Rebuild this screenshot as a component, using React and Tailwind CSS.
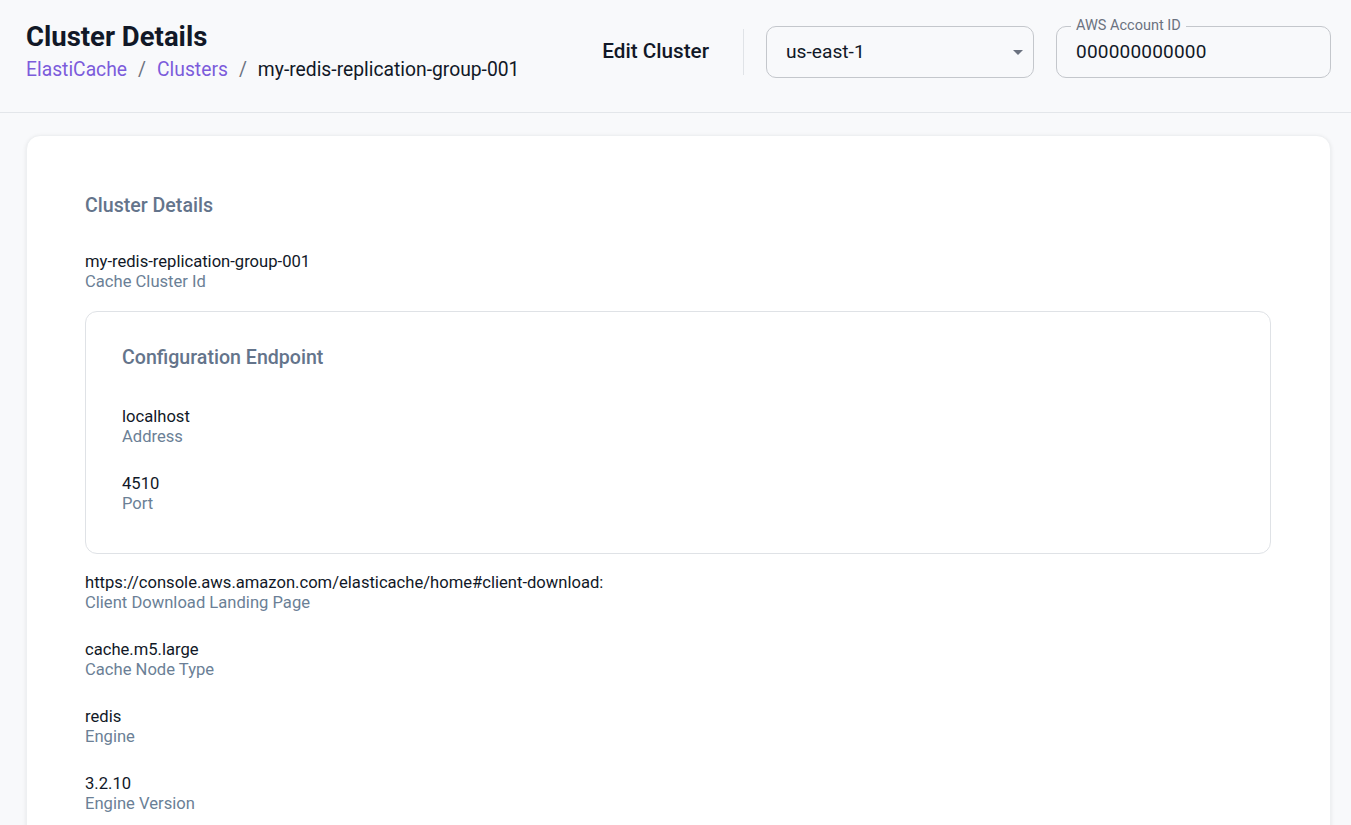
const font = { fontFamily: 'Roboto, "Noto Sans", sans-serif' }

function Field({ value, label }) {
  return (
    <div className="flex flex-col">
      <span className="text-[16.6px] leading-5 text-[#111827]">{value}</span>
      <span className="text-[16.6px] leading-5 text-[#6b7f96]">{label}</span>
    </div>
  )
}

export default function App() {
  return (
    <div className="min-h-screen bg-[#f8f9fb]" style={font}>
      <header className="h-[113px] border-b border-[#e3e6ea] flex items-start justify-between pl-[26px] pr-[20px] pt-[22px]">
        <div className="flex flex-col">
          <h1 className="text-[27.5px] leading-[30px] font-bold text-[#111827]">Cluster Details</h1>
          <nav className="flex items-center gap-[11px] text-[19.3px] leading-[26px] mt-[5px]">
            <span className="text-[#7c5cdb]">ElastiCache</span>
            <span className="text-[#6b7280]">/</span>
            <span className="text-[#7c5cdb]">Clusters</span>
            <span className="text-[#6b7280]">/</span>
            <span className="text-[#111827]">my-redis-replication-group-001</span>
          </nav>
        </div>
        <div className="flex items-center mt-[4px]">
          <span className="text-[20.7px] font-medium text-[#111827] mr-[34px]">Edit Cluster</span>
          <div className="w-px h-[46px] bg-[#e0e3e7] mr-[22px]" />
          <div className="w-[268px] h-[52px] rounded-[10px] border border-[#c4c7cc] flex items-center justify-between pl-[19px] pr-[10px] mr-[22px]">
            <span className="text-[19.2px] text-[#111827]">us-east-1</span>
            <svg width="10" height="5" viewBox="0 0 10 5"><path d="M0 0h10L5 5z" fill="#6b7280" /></svg>
          </div>
          <div className="relative w-[275px] h-[52px] rounded-[10px] border border-[#c4c7cc] flex items-center pl-[19px]">
            <span className="absolute -top-[9px] left-[14px] px-[5px] bg-[#f8f9fb] text-[14.5px] leading-[16px] text-[#6b7280]">AWS Account ID</span>
            <span className="text-[19px] text-[#111827] tracking-[0.2px]">000000000000</span>
          </div>
        </div>
      </header>
      <main className="px-[26px] pt-[22px] pr-[20px]">
        <section className="bg-white rounded-[14px] shadow-[0_1px_4px_rgba(0,0,0,0.08)] border border-[#eef0f2] pl-[58px] pr-[59px] pt-[56px] pb-[40px]">
          <h2 className="text-[19.6px] leading-[28px] font-medium text-[#64748b]">Cluster Details</h2>
          <div className="mt-[32px]">
            <Field value="my-redis-replication-group-001" label="Cache Cluster Id" />
          </div>
          <div className="mt-[19px] border border-[#dfe2e6] rounded-[12px] pl-[36px] pt-[32px] pb-[39px]">
            <h3 className="text-[19.6px] leading-[28px] font-medium text-[#64748b]">Configuration Endpoint</h3>
            <div className="mt-[35px] flex flex-col gap-[27px]">
              <Field value="localhost" label="Address" />
              <Field value="4510" label="Port" />
            </div>
          </div>
          <div className="mt-[19px] flex flex-col gap-[27px]">
            <Field value="https://console.aws.amazon.com/elasticache/home#client-download:" label="Client Download Landing Page" />
            <Field value="cache.m5.large" label="Cache Node Type" />
            <Field value="redis" label="Engine" />
            <Field value="3.2.10" label="Engine Version" />
          </div>
        </section>
      </main>
    </div>
  )
}
